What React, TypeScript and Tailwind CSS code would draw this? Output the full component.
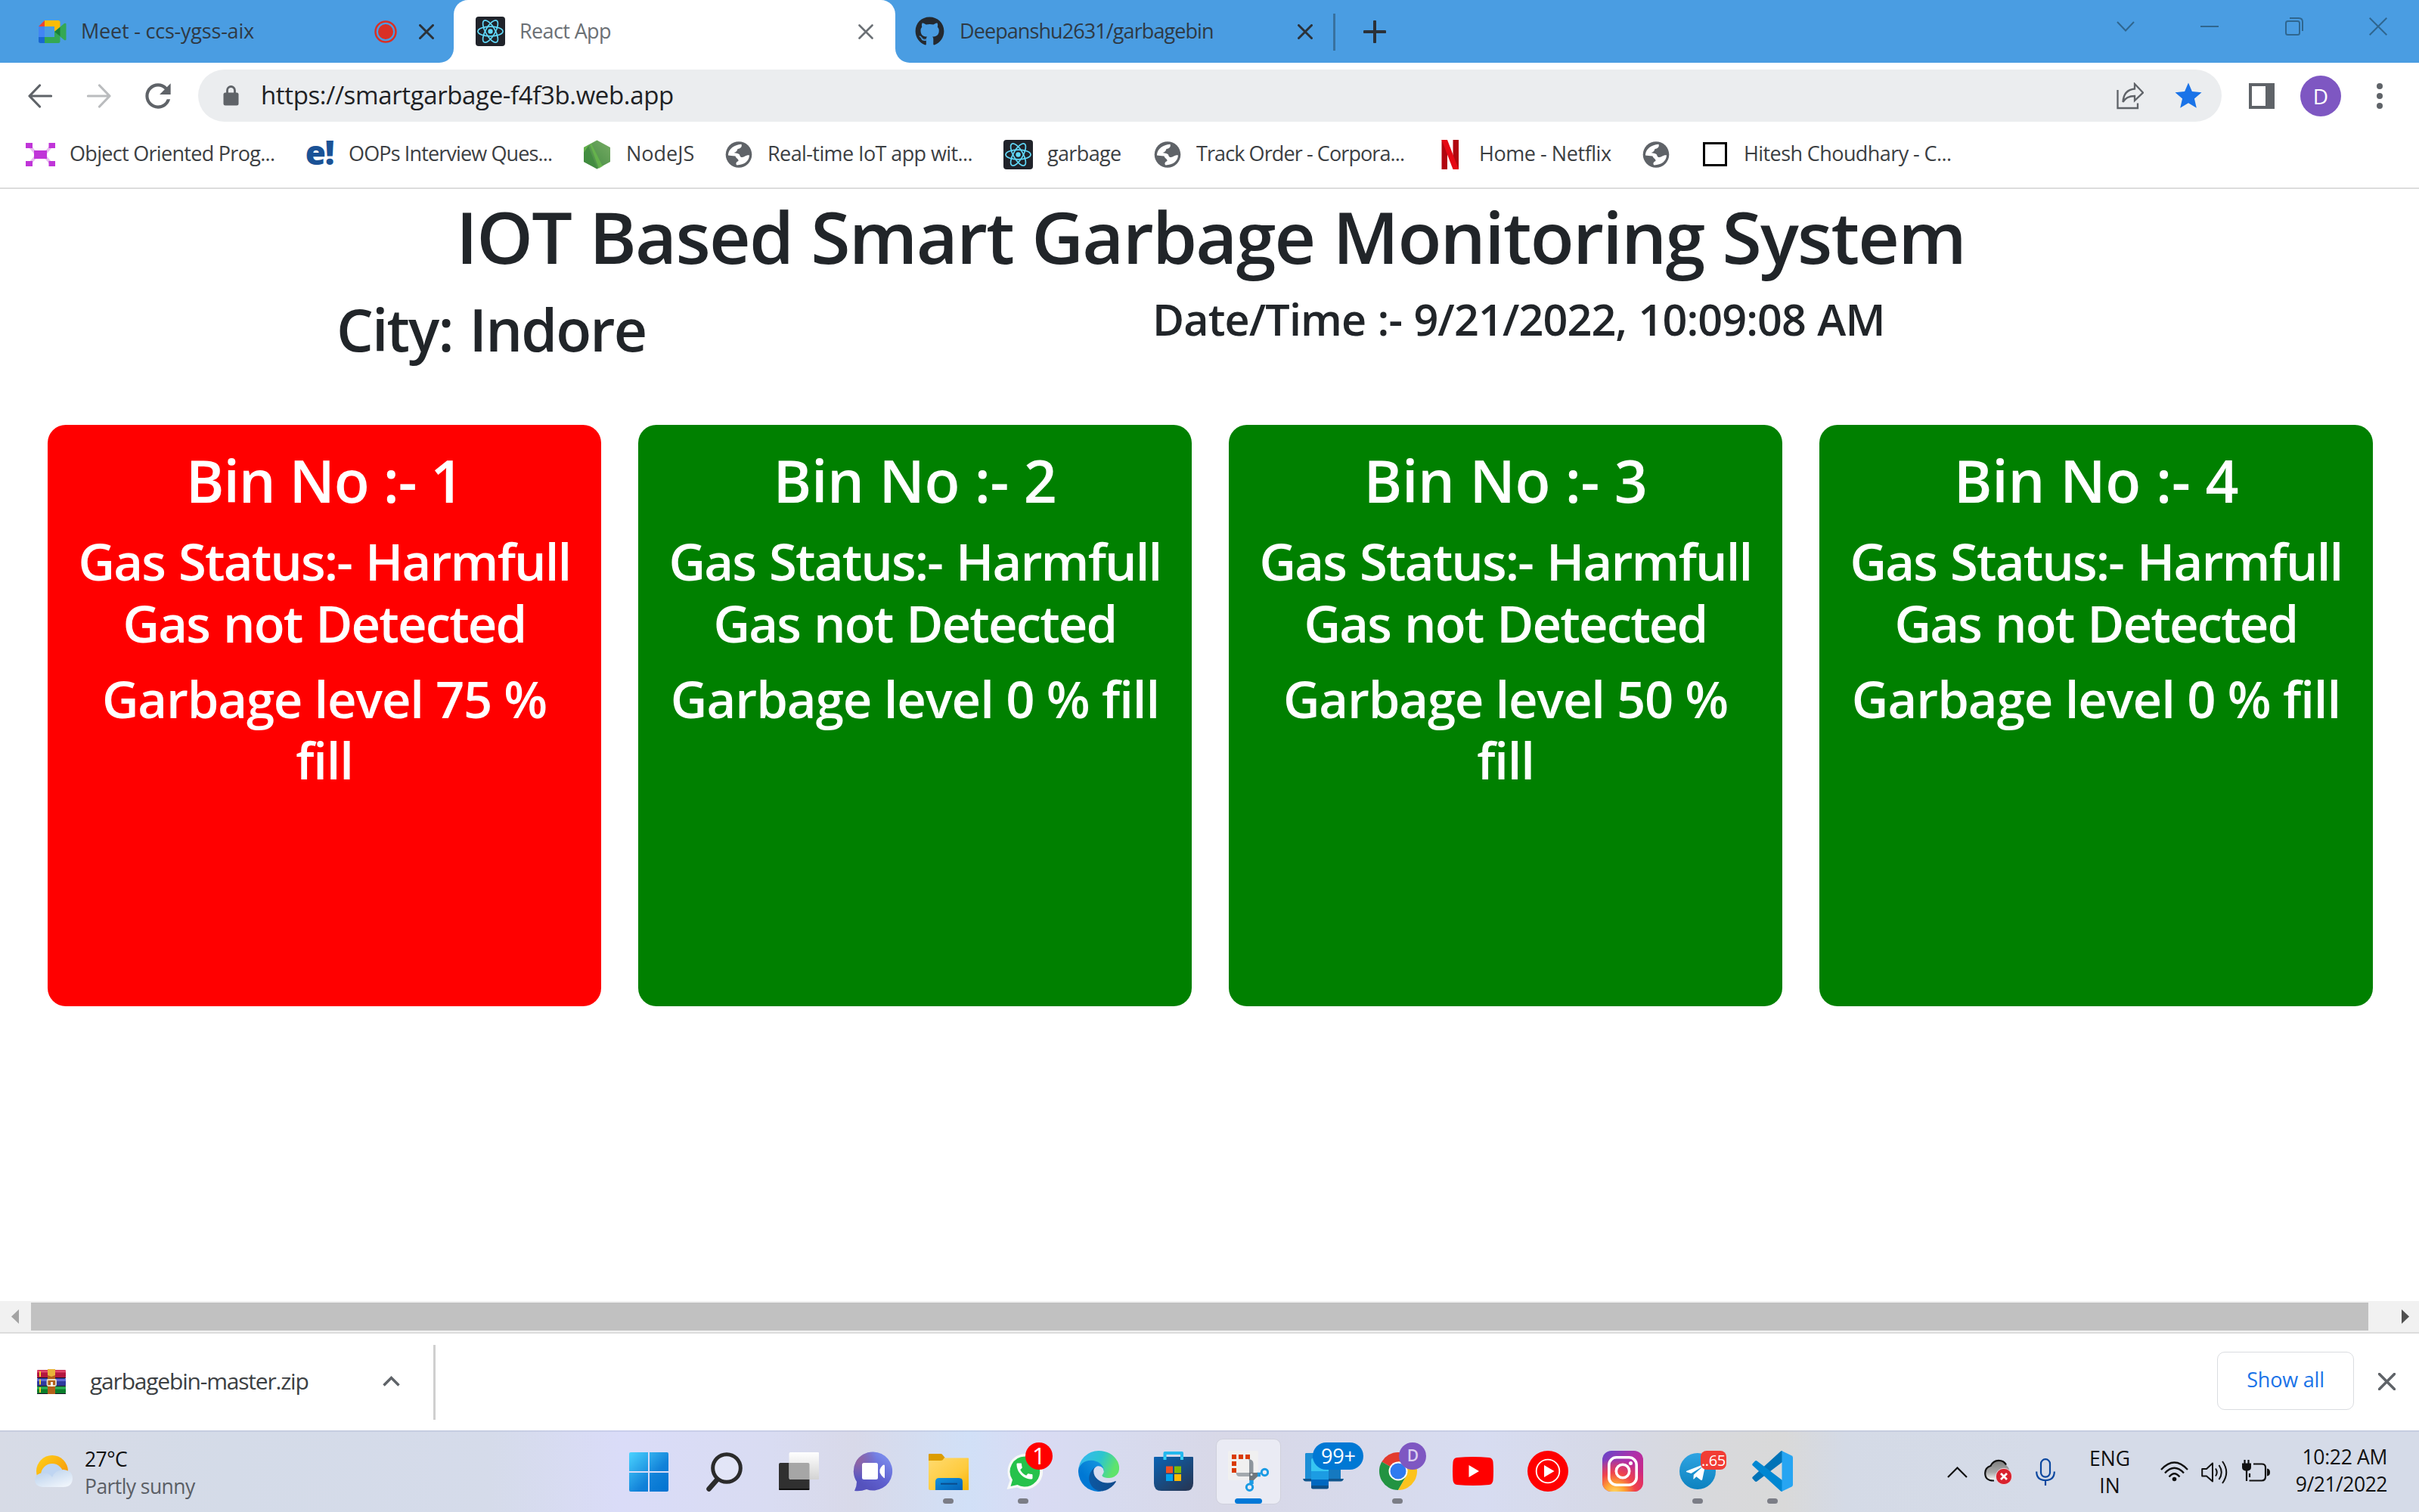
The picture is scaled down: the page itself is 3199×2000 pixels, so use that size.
import type { ReactNode } from "react";
import { MdCall, MdRefresh, MdStar } from "react-icons/md";
import { FaGithub, FaTelegramPlane } from "react-icons/fa";

/* ---------- small shared icons ---------- */

const ReactLogo = () => (
  <svg className="size-[39px]" viewBox="0 0 39 39" fill="none">
    <rect width="39" height="39" rx="4" fill="#20232a" />
    <g stroke="#61dafb" strokeWidth="1.7">
      <ellipse cx="19.5" cy="19.5" rx="16.5" ry="6.3" />
      <ellipse cx="19.5" cy="19.5" rx="16.5" ry="6.3" transform="rotate(60 19.5 19.5)" />
      <ellipse cx="19.5" cy="19.5" rx="16.5" ry="6.3" transform="rotate(120 19.5 19.5)" />
    </g>
    <circle cx="19.5" cy="19.5" r="3.2" fill="#61dafb" />
  </svg>
);

const Globe = () => (
  <svg className="size-[39px]" viewBox="-2.5 -2 39 39">
    <circle cx="17.5" cy="17.5" r="17.3" fill="#5f6368" />
    <path
      fill="#fff"
      d="M3.5 17C4.5 10 11 4.500 21 3.800C22 7 20.500 9.500 16 10C15.500 13 13 14.500 11 15C14 16 18.500 15.500 19 19C20 22 23 21 25 20C27.500 18.500 30 18 31.500 18.500C31 26 25 31 15 31.500C13 30 14 27 17 26C17.500 23 14 23 13 19.500C9 19 6 19 3.500 18.500Z"
    />
  </svg>
);

const Cross = ({ size, color, sw = 3 }: { size: number; color: string; sw?: number }) => (
  <svg width={size} height={size} viewBox={`0 0 ${size} ${size}`} fill="none">
    <path d={`M1.5 1.5L${size - 1.5} ${size - 1.5}M${size - 1.5} 1.5L1.5 ${size - 1.5}`} stroke={color} strokeWidth={sw} strokeLinecap="round" />
  </svg>
);

const MeetLogo = () => (
  <svg className="h-[30px] w-[37px]" viewBox="0 0 37 30">
    <path d="M8 0V8H0Z" fill="#ea4335" />
    <path d="M0 8H8V22H0Z" fill="#4285f4" />
    <path d="M0 22H8V30H2.500Q0 30 0 27.500Z" fill="#1967d2" />
    <path d="M8 0H26Q28.500 0 28.500 2.500V9L21 15V8H8Z" fill="#fbbc04" />
    <path d="M8 22H21V15L28.500 21V27.500Q28.500 30 26 30H8Z" fill="#34a853" />
    <path d="M21 15L34 4Q36.500 3 36.500 5V25Q36.500 27 34 26Z" fill="#34a853" />
    <path d="M21 15L28.500 9V21Z" fill="#188038" />
  </svg>
);

/* ---------- tab strip ---------- */

function TabStrip() {
  return (
    <div className="flex h-[83px] bg-[#4a9de2] text-[27px] text-[#2f3a45]">
      <div className="flex w-[600px] items-center pl-[51px]">
        <MeetLogo />
        <span className="ml-[19px] w-[388px] tracking-[-0.0078em]">Meet - ccs-ygss-aix</span>
        <svg className="size-[30px]" viewBox="0 0 30 30" fill="none">
          <circle cx="15" cy="15" r="13.500" stroke="#d93025" strokeWidth="2.500" />
          <circle cx="15" cy="15" r="10" fill="#d93025" />
        </svg>
        <span className="ml-[29px]">
          <Cross size={20} color="#2b3138" />
        </span>
      </div>

      <div className="relative flex w-[584px] items-center rounded-t-[19px] bg-white pl-[29px] text-[#6b7075]">
        <svg className="absolute bottom-0 -left-[19px] size-[19px]" viewBox="0 0 19 19">
          <path d="M19 0V19H0A19 19 0 0 0 19 0Z" fill="#fff" />
        </svg>
        <svg className="absolute -right-[19px] bottom-0 size-[19px]" viewBox="0 0 19 19">
          <path d="M0 0V19H19A19 19 0 0 1 0 0Z" fill="#fff" />
        </svg>
        <ReactLogo />
        <span className="ml-[19px] w-[448px] tracking-[-0.0231em]">React App</span>
        <Cross size={20} color="#6b7075" sw={2.6} />
      </div>

      <div className="flex w-[579px] items-center pl-[26px]">
        <FaGithub className="size-[39px] text-[#24292f]" />
        <span className="ml-[20px] w-[447px] tracking-[-0.0338em]">Deepanshu2631/garbagebin</span>
        <Cross size={20} color="#2b3138" />
      </div>

      <div className="mt-[18px] h-[49px] w-[3px] bg-[#38719f]" />
      <svg className="mt-[27px] ml-[37px] size-[30px]" viewBox="0 0 30 30">
        <path d="M15 1.500V28.500M1.500 15H28.500" stroke="#2b3138" strokeWidth="4" strokeLinecap="round" />
      </svg>

      <div className="flex h-[70px] flex-1 items-center justify-end gap-[87.500px] pr-[42px]">
        <svg className="h-[14px] w-[24px]" viewBox="0 0 24 14" fill="none">
          <path d="M1 1L12 12.500L23 1" stroke="#2f668f" strokeWidth="2" />
        </svg>
        <div className="h-[2px] w-[24px] bg-[#2f668f]" />
        <svg className="size-[24px]" viewBox="0 0 24 24" fill="none" stroke="#2f668f" strokeWidth="2">
          <rect x="1" y="5" width="18" height="18" rx="2.500" />
          <path d="M6 1H18Q23 1 23 6V18" />
        </svg>
        <svg className="size-[24px]" viewBox="0 0 24 24" fill="none">
          <path d="M0.700 0.700L23.300 23.300M23.300 0.700L0.700 23.300" stroke="#2f668f" strokeWidth="2" />
        </svg>
      </div>
    </div>
  );
}

/* ---------- toolbar ---------- */

const Arrow = ({ color, flip }: { color: string; flip?: boolean }) => (
  <svg className={flip ? "size-[32px] rotate-180" : "size-[32px]"} viewBox="0 0 32 32" fill="none">
    <path d="M30.500 16H2.500M15.500 2L2 16L15.500 30" stroke={color} strokeWidth="3.200" strokeLinecap="round" strokeLinejoin="round" />
  </svg>
);

function Toolbar() {
  return (
    <div className="flex h-[87px] items-center bg-white pl-[37px]">
      <Arrow color="#5f6368" />
      <span className="ml-[46px]">
        <Arrow color="#babcbe" flip />
      </span>
      <MdRefresh className="ml-[37px] size-[50px] text-[#5f6368]" />
      <div className="ml-[28px] flex h-[69px] w-[2676px] items-center rounded-full bg-[#ebedef] pl-[33px]">
        <svg className="h-[27px] w-[21px]" viewBox="0 0 21 27">
          <rect x="0.500" y="9.500" width="20" height="17" rx="2.500" fill="#5f6368" />
          <path d="M5.500 10V6.500A5 5 0 0 1 15.500 6.500V10" fill="none" stroke="#5f6368" strokeWidth="2.800" />
        </svg>
        <span className="mb-px ml-[29px] flex-1 text-[33px] tracking-[-0.0111em] text-[#202124]">
          https://smartgarbage-f4f3b.web.app
        </span>
        <svg className="size-[36px]" viewBox="0 0 36 36" fill="none" stroke="#5f6368" strokeWidth="2.300">
          <path d="M1.500 10V34H28V27.500" />
          <path d="M24 2L35 13.500L24 24V18C16 18 11.500 20.500 8.500 26C9 16 14 9.500 24 8.500Z" strokeLinejoin="miter" />
        </svg>
        <MdStar className="mr-[23px] ml-[38px] size-[42px] text-[#1a73e8]" />
      </div>
      <div className="ml-[36px] h-[34px] w-[34px] border-[4px] border-r-[12px] border-[#5f6368]" />
      <div className="ml-[34px] flex size-[54px] items-center justify-center rounded-full bg-[#7e57c2] text-[28px] text-white">D</div>
      <div className="ml-[47px] flex flex-col gap-[5px]">
        <i className="size-[8px] rounded-full bg-[#5f6368]" />
        <i className="size-[8px] rounded-full bg-[#5f6368]" />
        <i className="size-[8px] rounded-full bg-[#5f6368]" />
      </div>
    </div>
  );
}

/* ---------- bookmarks ---------- */

const PurpleNodes = () => (
  <svg className="size-[39px]" viewBox="0 0 39 39">
    <path d="M5 8L15 20L5 32M34 8L24 20L34 32" fill="none" stroke="#e8bdf0" strokeWidth="4" />
    <g fill="#c035d8">
      <rect x="11" y="14" width="17" height="11" />
      <rect x="0" y="4" width="9" height="7" />
      <rect x="30.500" y="4" width="8.500" height="7" />
      <rect x="0" y="28" width="9" height="7" />
      <rect x="30.500" y="28" width="8.500" height="7" />
    </g>
  </svg>
);

const ELogo = () => (
  <div className="flex size-[39px] items-center justify-center pb-[7px] text-[44px] leading-none font-extrabold tracking-[-0.03em] text-[#1a5296]">e!</div>
);

const NodeLogo = () => (
  <svg className="size-[39px]" viewBox="0 0 39 39">
    <defs>
      <linearGradient id="nodeA" x1="1" y1="0" x2="0" y2="1">
        <stop offset="0" stopColor="#76ac64" />
        <stop offset="1" stopColor="#3f873f" />
      </linearGradient>
    </defs>
    <path d="M19.500 0.500L37 10V29L19.500 38.500L2 29V10Z" fill="url(#nodeA)" />
    <path d="M19.500 0.500L2 10V17L10 5.500L22 38L27 35L12 5Z" fill="#6cc04a" opacity=".65" />
    <path d="M2 17L8 8L20 38.500L2 29Z" fill="#3f8b3d" opacity=".75" />
  </svg>
);

const Netflix = () => (
  <svg className="size-[39px]" viewBox="0 0 39 39">
    <path d="M8.500 0H16V39L8.500 39Z" fill="#b1060f" />
    <path d="M23.500 0H31V39L23.500 38Z" fill="#b1060f" />
    <path d="M8.500 0H16L31 39H23.500Z" fill="#e50914" />
  </svg>
);

const Square = () => (
  <div className="flex size-[39px] items-center justify-center">
    <div className="size-[32px] border-[3.5px] border-black bg-white" />
  </div>
);

const bookmarks: { icon: ReactNode; label: string; width: string; track: string }[] = [
  { icon: <PurpleNodes />, label: "Object Oriented Prog...", width: "w-[369px]", track: "tracking-[-0.0258em]" },
  { icon: <ELogo />, label: "OOPs Interview Ques...", width: "w-[367px]", track: "tracking-[-0.0321em]" },
  { icon: <NodeLogo />, label: "NodeJS", width: "w-[187px]", track: "tracking-[0]" },
  { icon: <Globe />, label: "Real-time IoT app wit...", width: "w-[370px]", track: "tracking-[-0.0221em]" },
  { icon: <ReactLogo />, label: "garbage", width: "w-[197px]", track: "tracking-[-0.0239em]" },
  { icon: <Globe />, label: "Track Order - Corpora...", width: "w-[374px]", track: "tracking-[-0.0335em]" },
  { icon: <Netflix />, label: "Home - Netflix", width: "w-[272px]", track: "tracking-[-0.0167em]" },
  { icon: <Globe />, label: "", width: "w-[78px]", track: "" },
  { icon: <Square />, label: "Hitesh Choudhary - C...", width: "w-[340px]", track: "tracking-[-0.0217em]" },
];

function Bookmarks() {
  return (
    <div className="flex h-[80px] items-center border-b-2 border-[#dcdcdc] bg-white pb-[10px] pl-[34px] text-[27px] text-[#3c4043]">
      {bookmarks.map((b, i) => (
        <div key={i} className={`flex shrink-0 items-center gap-[19px] whitespace-nowrap ${b.width}`}>
          {b.icon}
          {b.label && <span className={`-mt-[2px] ${b.track}`}>{b.label}</span>}
        </div>
      ))}
    </div>
  );
}

/* ---------- page ---------- */

const bins = [
  { no: 1, lines: ["Garbage level 75 %", "fill"], bg: "bg-[#ff0000]", track: "tracking-[-0.0180em]", head: "tracking-[-0.014em]" },
  { no: 2, lines: ["Garbage level 0 % fill"], bg: "bg-[#008000]", track: "tracking-[-0.0155em]", head: "tracking-[-0.004em]" },
  { no: 3, lines: ["Garbage level 50 %", "fill"], bg: "bg-[#008000]", track: "tracking-[-0.0180em]", head: "tracking-[-0.004em]" },
  { no: 4, lines: ["Garbage level 0 % fill"], bg: "bg-[#008000]", track: "tracking-[-0.0155em]", head: "tracking-[-0.002em]" },
];

function Page() {
  return (
    <main className="h-[1471px] bg-white pt-[5px] font-semibold whitespace-nowrap text-[#212529]">
      <h1 className="pl-[603px] text-[95px] leading-[114px] tracking-[-0.0185em] [word-spacing:0.012em]">
        IOT Based Smart Garbage Monitoring System
      </h1>
      <div className="flex h-[193px] items-start pl-[445px]">
        <h2 className="mt-[21px] w-[1079px] text-[77px] leading-[92px] tracking-[-0.0245em] [word-spacing:0.05em]">City: Indore</h2>
        <h3 className="mt-[19px] text-[57.5px] leading-[69px] tracking-[-0.0155em] [word-spacing:0.022em]">Date/Time :- 9/21/2022, 10:09:08 AM</h3>
      </div>
      <div className="flex gap-[49px] pl-[63px]">
        {bins.map((b) => (
          <section key={b.no} className={`h-[769px] w-[732px] rounded-[24px] pt-[28px] text-center text-white ${b.bg}`}>
            <h2 className={`text-[77px] leading-[92px] ${b.head}`}>Bin No :- {b.no}</h2>
            <h3 className="mt-[19px] text-[67px] leading-[82px] tracking-[-0.0275em] [word-spacing:0.035em]">
              <span className="block">Gas Status:- Harmfull</span>
              <span className="block">Gas not Detected</span>
            </h3>
            <h3 className={`mt-[19px] text-[67px] leading-[81px] ${b.track}`}>
              {b.lines.map((l) => (
                <span key={l} className="block">
                  {l}
                </span>
              ))}
            </h3>
          </section>
        ))}
      </div>
    </main>
  );
}

function ScrollBar() {
  return (
    <div className="flex h-[43px] items-center border-b-2 border-[#dcdcdc] bg-[#f1f1f1] pl-[15px]">
      <svg className="h-[19px] w-[10px]" viewBox="0 0 10 19">
        <path d="M10 0V19L0 9.500Z" fill="#a3a3a3" />
      </svg>
      <div className="ml-[16px] h-[37px] w-[3091px] bg-[#c1c1c1]" />
      <svg className="ml-[44px] h-[19px] w-[10px]" viewBox="0 0 10 19">
        <path d="M0 0V19L10 9.500Z" fill="#505050" />
      </svg>
    </div>
  );
}

const RarIcon = () => (
  <svg className="h-[34px] w-[38px]" viewBox="0 0 38 34">
    <rect y="1" width="38" height="10.500" rx="1.500" fill="#b3173f" />
    <rect y="1.500" width="38" height="3" fill="#e0456a" />
    <rect y="12" width="38" height="10.500" rx="1.500" fill="#2f3aa0" />
    <rect y="13" width="38" height="3" fill="#5f6bd6" />
    <rect y="22.500" width="38" height="10" rx="1.500" fill="#0a7d2c" />
    <rect y="23.500" width="38" height="3" fill="#2fb257" />
    <path d="M0 11.500H38M0 22.300H38M0 32.500H38" stroke="#1c1626" strokeWidth="1" />
    <g fill="#f6d02f">
      <rect x="3" y="3" width="2" height="7" />
      <rect x="3" y="13.500" width="2" height="7" />
      <rect x="3" y="24" width="2" height="7" />
    </g>
    <rect x="14" y="0" width="10" height="33" fill="#b4601a" />
    <path d="M14 0H24V8L19 10L14 8Z" fill="#e8b43a" />
    <rect x="13.500" y="14" width="11.500" height="8" rx="1.500" fill="none" stroke="#eadfc0" strokeWidth="1.800" />
    <rect x="18" y="17" width="3" height="6" fill="#f3f3f3" />
  </svg>
);

function DownloadBar() {
  return (
    <div className="flex h-[128px] items-center bg-white pl-[49px]">
      <RarIcon />
      <span className="-mt-[4px] ml-[32px] w-[387px] text-[30px] tracking-[-0.0399em] text-[#3c4043]">garbagebin-master.zip</span>
      <svg className="-mt-[2px] h-[14px] w-[23px]" viewBox="0 0 23 14" fill="none">
        <path d="M1.500 12.500L11.500 2.500L21.500 12.500" stroke="#5f6368" strokeWidth="3.500" />
      </svg>
      <div className="ml-[44px] h-[99px] w-[3px] bg-[#cfcfcf]" />
      <div className="mb-[3px] ml-auto flex h-[77px] w-[181px] items-center justify-center rounded-[10px] border-[1.5px] border-[#dadce0] pb-[3px] text-[27px] font-medium tracking-[-0.0072em] text-[#1a73e8]">
        Show all
      </div>
      <span className="mr-[31px] mb-[2px] ml-[32px]">
        <Cross size={23} color="#5f6368" sw={3.6} />
      </span>
    </div>
  );
}

/* ---------- taskbar ---------- */

const Glyph = ({ children, box = "0 0 54 54" }: { children: ReactNode; box?: string }) => (
  <svg className="size-[54px]" viewBox={box}>
    {children}
  </svg>
);

const StartIcon = () => (
  <Glyph>
    <defs>
      <linearGradient id="win" gradientUnits="userSpaceOnUse" x1="1" y1="2" x2="53" y2="54">
        <stop offset="0" stopColor="#4ad3ff" />
        <stop offset="0.600" stopColor="#1282d9" />
        <stop offset="1" stopColor="#0072d0" />
      </linearGradient>
    </defs>
    <path fill="url(#win)" d="M3 2H26V27H1V4Q1 2 3 2ZM28 2H51Q53 2 53 4V27H28ZM1 29H26V54H3Q1 54 1 52ZM28 29H53V52Q53 54 51 54H28Z" />
  </Glyph>
);

const SearchIcon = () => (
  <Glyph>
    <circle cx="31" cy="23" r="18.300" fill="#ffffff" fillOpacity=".25" stroke="#2b2b2b" strokeWidth="5" />
    <path d="M18.500 38L7.500 50.500" stroke="#2b2b2b" strokeWidth="6.500" strokeLinecap="round" />
  </Glyph>
);

const TaskViewIcon = () => (
  <Glyph>
    <defs>
      <linearGradient id="tvL" x1="0" y1="0" x2="0" y2="1">
        <stop offset="0" stopColor="#fff" />
        <stop offset="1" stopColor="#d3d3d3" />
      </linearGradient>
    </defs>
    <rect x="1" y="16" width="40.500" height="36" rx="2" fill="#303030" />
    <rect x="1" y="50" width="40.500" height="2" rx="1" fill="#0e0e0e" />
    <rect x="14.500" y="2" width="40" height="36" rx="2" fill="url(#tvL)" />
    <path d="M14.500 16H39.500Q41.500 16 41.500 18V38H16.500Q14.500 38 14.500 36Z" fill="#a6a6a6" />
  </Glyph>
);

const ChatIcon = () => (
  <Glyph>
    <defs>
      <linearGradient id="chat" x1="0.900" y1="0.100" x2="0.300" y2="0.900">
        <stop offset="0" stopColor="#7d8fee" />
        <stop offset="0.600" stopColor="#5f60cf" />
        <stop offset="1" stopColor="#5552bd" />
      </linearGradient>
      <radialGradient id="chatP" cx="0.100" cy="0.200" r="0.500">
        <stop offset="0" stopColor="#95659f" />
        <stop offset="1" stopColor="#95659f" stopOpacity="0" />
      </radialGradient>
    </defs>
    <path d="M27 1.500A25.500 25.500 0 1 1 18 51Q10 54 2 53Q5 47 5 41A25.500 25.500 0 0 1 27 1.500Z" fill="url(#chat)" />
    <path d="M27 1.500A25.500 25.500 0 1 1 18 51Q10 54 2 53Q5 47 5 41A25.500 25.500 0 0 1 27 1.500Z" fill="url(#chatP)" />
    <rect x="12" y="16" width="21" height="22" rx="2.500" fill="#fff" />
    <path d="M35.500 25Q38 19 41 18.500Q42 18.500 42 20V35Q42 36.500 41 36Q38 34 35.500 29Z" fill="#fff" />
  </Glyph>
);

const FolderIcon = () => (
  <Glyph>
    <defs>
      <linearGradient id="fold" x1="0" y1="0" x2="1" y2="1">
        <stop offset="0.100" stopColor="#ffd867" />
        <stop offset="0.600" stopColor="#fecb3e" />
        <stop offset="1" stopColor="#f8b100" />
      </linearGradient>
      <linearGradient id="foldB" x1="0" y1="0" x2="1" y2="1">
        <stop offset="0" stopColor="#1193e0" />
        <stop offset="1" stopColor="#0560b4" />
      </linearGradient>
    </defs>
    <path d="M2 4H17Q19 4 20 6L22.500 9V14H1V5Q1 4 2 4Z" fill="#dc9c00" />
    <path d="M1 13H17Q20 13 21.500 9.500H53Q55 9.500 55 11.500V50Q55 52 53 52H3Q1 52 1 50Z" fill="url(#fold)" />
    <path d="M10 52V41Q10 36 15 36H41Q46 36 46 41V52Z" fill="url(#foldB)" />
    <path d="M17 43.700H39" stroke="#0a4c8c" strokeWidth="2" />
  </Glyph>
);

const WhatsAppIcon = () => (
  <div className="relative size-[54px]">
    <Glyph>
      <path d="M28.500 4A23.500 23.500 0 1 1 18 48.500L4.500 51L8.500 39A23.500 23.500 0 0 1 28.500 4Z" fill="#f7f9f7" />
      <path d="M28.500 7.500A20 20 0 1 1 18.500 45L9.500 47L12 38.500A20 20 0 0 1 28.500 7.500Z" fill="#25c24b" />
    </Glyph>
    <MdCall className="absolute top-[13px] left-[14px] size-[28px] text-white" />
  </div>
);

const EdgeIcon = () => (
  <Glyph box="0 0 256 256">
    <defs>
      <linearGradient id="e1" x1="0" y1="0.500" x2="1" y2="0.500">
        <stop offset="0" stopColor="#0c59a4" />
        <stop offset="1" stopColor="#114a8b" />
      </linearGradient>
      <linearGradient id="e2" x1="1" y1="0" x2="0.200" y2="1">
        <stop offset="0" stopColor="#1b9de2" />
        <stop offset="0.700" stopColor="#0078d4" />
      </linearGradient>
      <linearGradient id="e3" x1="0" y1="0.300" x2="1" y2="0.600">
        <stop offset="0" stopColor="#35b8f1" />
        <stop offset="0.500" stopColor="#2cc5cf" />
        <stop offset="0.900" stopColor="#5fe36c" />
      </linearGradient>
    </defs>
    <path fill="url(#e1)" d="M230.500 190.500c-3.400 1.800-6.900 3.400-10.500 4.700a101.700 101.700 0 0 1-35.800 6.500c-47.200 0-88.300-32.500-88.300-74.100a31.500 31.500 0 0 1 16.400-27.300c-42.700 1.800-53.600 46.300-53.600 72.300 0 73.700 67.900 81.200 82.500 81.200 7.900 0 19.700-2.300 26.800-4.500l1.300-.5a128 128 0 0 0 66.400-52.700 4 4 0 0 0-5.200-5.600z" />
    <path fill="url(#e2)" d="M105.700 241.400a79.200 79.200 0 0 1-22.700-21.300 80.700 80.700 0 0 1 29.400-120c3.100-1.500 8.400-4.100 15.500-4a32.300 32.300 0 0 1 25.700 13 31.900 31.900 0 0 1 6.300 18.700c0-.2 24.500-79.600-80-79.600-43.900 0-80 41.600-80 78.200a130.200 130.200 0 0 0 12.100 56 128 128 0 0 0 156.400 67 75.600 75.600 0 0 1-62.800-8z" />
    <path fill="url(#e3)" d="M152.300 148.900c-.9 1-3.400 2.500-3.400 5.600 0 2.600 1.700 5.200 4.800 7.300 14.400 10.100 41.700 8.700 41.800 8.700a59.900 59.900 0 0 0 30.400-8.300 61.800 61.800 0 0 0 30.500-53.200c.3-22.400-8-37.300-11.300-43.900C223.800 23.900 177.700 0 127.600 0A128 128 0 0 0 0 126.200c.5-36.500 36.800-66 80-66 3.500 0 23.500.3 42 10.100 16.300 8.600 24.900 18.900 30.800 29.200 6.200 10.700 7.300 24.100 7.300 29.500 0 5.300-2.700 13.300-7.800 19.900z" />
  </Glyph>
);

const StoreIcon = () => (
  <Glyph>
    <defs>
      <linearGradient id="store" x1="0" y1="0" x2="0.800" y2="1">
        <stop offset="0" stopColor="#0a63b4" />
        <stop offset="1" stopColor="#253858" />
      </linearGradient>
    </defs>
    <path d="M15.500 12V3H38V12" fill="none" stroke="#25b8ee" strokeWidth="4" strokeLinejoin="round" />
    <path d="M1 9Q1 8 2 8H52Q53 8 53 9V43Q53 53 43 53H11Q1 53 1 43Z" fill="url(#store)" />
    <path d="M15.500 8V12M38 8V12" stroke="#35d0f6" strokeWidth="4" />
    <path d="M17 20.500H26V29.500H17Z" fill="#f25022" />
    <path d="M28 20.500H37V29.500H28Z" fill="#7fba00" />
    <path d="M17 31H26V40H17Z" fill="#00a4ef" />
    <path d="M28 31H37V40H28Z" fill="#ffb900" />
  </Glyph>
);

const SnipIcon = () => (
  <div className="relative flex h-[87px] w-[86px] items-center justify-center rounded-[9px] border border-[#cfd0dc] bg-[#eaebf4]">
    <Glyph>
      <rect x="0" y="0" width="40" height="39" rx="2" fill="#f0f0f0" />
      <path d="M5 5h6v6h-6zM14 5h6v6h-6zM23 5h6v6h-6zM5 14h6v6h-6zM5 23h6v6h-6z" fill="#da3b01" />
      <path d="M27 11Q33.500 11.500 33.500 17V34H28V13Z" fill="#8d959c" />
      <path d="M10.500 29H34V34H15Q11 34 10.500 29Z" fill="#a3a9ae" />
      <path d="M38 31.500H43M31 39V44" stroke="#1b9be4" strokeWidth="5.400" />
      <circle cx="48.500" cy="28.500" r="4.200" fill="none" stroke="#1b9be4" strokeWidth="3" />
      <circle cx="28.500" cy="48.300" r="4.200" fill="none" stroke="#1b9be4" strokeWidth="3" />
      <path d="M28 29H39V34L34 39H28Z" fill="#6f777d" />
      <circle cx="31" cy="31.500" r="1.500" fill="#dfe3e6" />
    </Glyph>
  </div>
);

const PhoneIcon = () => (
  <Glyph>
    <rect x="3" y="3" width="47" height="36" rx="2" fill="#1579c0" />
    <rect x="3" y="3" width="12" height="36" rx="2" fill="#1b8ed6" />
    <path d="M0 37H54Q53 40.500 50 40.500H4Q1 40.500 0 37Z" fill="#10558c" />
    <path d="M11 12Q11 10 13 10H32Q34 10 34 12V27H11Z" fill="#37c6f2" />
    <path d="M11 27H34V38H11Z" fill="#1c9ce3" />
    <path d="M11 38H34V46H11Z" fill="#0068c0" />
    <path d="M11 46H34V48.500Q34 50.500 32 50.500H13Q11 50.500 11 48.500Z" fill="#0c4f88" />
  </Glyph>
);

const ChromeIcon = () => (
  <Glyph>
    <path d="M27 27L5.300 14.500A25 25 0 0 1 48.700 14.500H27Z" fill="#e33b2e" />
    <path d="M27 27L5.300 14.500A25 25 0 0 0 27 52L37.800 33.200Z" fill="#229342" />
    <path d="M27 14.500H48.700A25 25 0 0 1 27 52L37.800 33.200L27 27Z" fill="#fcc31e" />
    <circle cx="27" cy="27" r="12.500" fill="#fff" />
    <circle cx="27" cy="27" r="10.500" fill="#2f7af0" />
  </Glyph>
);

const YouTubeIcon = () => (
  <Glyph>
    <path d="M6 9Q27 7 48 9Q53 9.500 53.500 15Q54.500 27 53.500 39Q53 44.500 48 45Q27 47 6 45Q1 44.500 0.500 39Q-0.500 27 0.500 15Q1 9.500 6 9Z" fill="#f00" />
    <path d="M21.500 19L35 27L21.500 35Z" fill="#fff" />
  </Glyph>
);

const YtMusicIcon = () => (
  <Glyph>
    <circle cx="27" cy="27" r="27" fill="#f00" />
    <circle cx="27" cy="27" r="15.300" fill="none" stroke="#fff" strokeWidth="1.800" />
    <path d="M22 19L35.500 27L22 35Z" fill="#fff" />
  </Glyph>
);

const InstagramIcon = () => (
  <Glyph>
    <defs>
      <linearGradient id="igB" x1="0.100" y1="0" x2="0.900" y2="1">
        <stop offset="0" stopColor="#6a45c8" />
        <stop offset="0.400" stopColor="#b02fa8" />
        <stop offset="1" stopColor="#e0246a" />
      </linearGradient>
      <radialGradient id="igR" cx="0.300" cy="1.050" r="0.850">
        <stop offset="0" stopColor="#ffdd6b" />
        <stop offset="0.300" stopColor="#ffa334" />
        <stop offset="0.600" stopColor="#f0434b" />
        <stop offset="1" stopColor="#f0434b" stopOpacity="0" />
      </radialGradient>
    </defs>
    <rect width="54" height="54" rx="12" fill="url(#igB)" />
    <rect width="54" height="54" rx="12" fill="url(#igR)" />
    <g fill="none" stroke="#fff" strokeWidth="3.600">
      <rect x="8.800" y="8.800" width="36.400" height="36.400" rx="10" />
      <circle cx="27" cy="27" r="8.700" />
    </g>
    <circle cx="37.500" cy="16.500" r="2.500" fill="#fff" />
  </Glyph>
);

const TelegramIcon = () => (
  <div className="relative size-[54px]">
    <Glyph>
      <defs>
        <linearGradient id="tg" x1="0" y1="0" x2="0" y2="1">
          <stop offset="0" stopColor="#2fa4e2" />
          <stop offset="1" stopColor="#0d82bf" />
        </linearGradient>
      </defs>
      <circle cx="27" cy="27" r="24" fill="url(#tg)" />
    </Glyph>
    <FaTelegramPlane className="absolute top-[14px] left-[10px] size-[29px] text-white" />
  </div>
);

const VsCodeIcon = () => (
  <Glyph>
    <path d="M0.800 37Q-0.300 36 0.800 34.500L38 0.500L40 0V15L6.500 40.500Q5 41.500 3.500 40Z" fill="#0073b7" />
    <path d="M0.800 17Q-0.300 18 0.800 19.500L38 53.500L40 54V39L6.500 13.500Q5 12.500 3.500 14Z" fill="#0087d2" />
    <path d="M39.500 0.300L52.500 6.500Q54 7.300 54 9V45Q54 46.700 52.500 47.500L39.500 53.700Z" fill="#27a5f2" />
  </Glyph>
);

const Badge = ({ className, children }: { className: string; children: ReactNode }) => (
  <div className={`absolute flex items-center justify-center leading-none ${className}`}>{children}</div>
);

const apps: { icon: ReactNode; badge?: ReactNode; running?: boolean; active?: boolean }[] = [
  { icon: <StartIcon /> },
  { icon: <SearchIcon /> },
  { icon: <TaskViewIcon /> },
  { icon: <ChatIcon /> },
  { icon: <FolderIcon />, running: true },
  {
    icon: <WhatsAppIcon />,
    running: true,
    badge: <Badge className="top-[16px] left-[52px] size-[36px] rounded-full bg-[#ff0000] pb-[2px] text-[31px] text-white">1</Badge>,
  },
  { icon: <EdgeIcon /> },
  { icon: <StoreIcon /> },
  { icon: <SnipIcon />, active: true },
  {
    icon: <PhoneIcon />,
    badge: (
      <Badge className="top-[16px] left-[36px] h-[36px] w-[67px] rounded-full bg-[#0078d4] pb-[2px] text-[27px] tracking-[-0.01em] text-white">99+</Badge>
    ),
  },
  {
    icon: <ChromeIcon />,
    running: true,
    badge: <Badge className="top-[16px] left-[51px] size-[36px] rounded-full bg-[#7e57c2] pb-px text-[21px] font-semibold text-[#dccff0]">D</Badge>,
  },
  { icon: <YouTubeIcon /> },
  { icon: <YtMusicIcon /> },
  { icon: <InstagramIcon /> },
  {
    icon: <TelegramIcon />,
    running: true,
    badge: <Badge className="top-[27px] left-[53px] h-[25px] w-[34px] rounded-[8px] bg-[#f23c34] text-[20px] tracking-[-0.02em] text-white">..65</Badge>,
  },
  { icon: <VsCodeIcon />, running: true },
];

function Tray() {
  return (
    <div className="flex flex-1 items-center pt-[2px] text-[26.5px] leading-[36px] text-[#111]">
      <svg className="ml-[181px] h-[15px] w-[27px]" viewBox="0 0 27 15" fill="none">
        <path d="M1 14L13.500 1.500L26 14" stroke="#111" strokeWidth="2.200" />
      </svg>
      <svg className="ml-[22px] h-[34px] w-[37px]" viewBox="0 0 37 34">
        <defs>
          <linearGradient id="cloud" x1="0" y1="0" x2="0" y2="1">
            <stop offset="0" stopColor="#7d7d7d" />
            <stop offset="0.600" stopColor="#a8a8a8" />
            <stop offset="1" stopColor="#f5f5f5" />
          </linearGradient>
        </defs>
        <path d="M9 27.500Q1.500 26.500 1.500 19Q1.500 11 9 9.500Q12 2 19 2Q27 2 30 9Q34 12 33 18L28 27Z" fill="url(#cloud)" />
        <path d="M13 28.500Q1.200 29 1.200 18.500Q1.500 11 8.500 9Q12 1.800 19 1.800Q26 1.800 29 7.500" fill="none" stroke="#111" strokeWidth="2.200" />
        <circle cx="26" cy="23" r="10.700" fill="#d9222e" stroke="#e9dfe6" strokeWidth="1" />
        <path d="M22 19L30 27M30 19L22 27" stroke="#fff" strokeWidth="2.800" />
      </svg>
      <svg className="-mt-px ml-[31px] h-[36px] w-[26px]" viewBox="0 0 26 36" fill="none" stroke="#0a479f" strokeWidth="2.200">
        <rect x="7" y="1.200" width="12" height="23.500" rx="6" />
        <path d="M1.200 17.500Q1.200 29 13 29Q24.800 29 24.800 17.500M13 29V36" />
      </svg>
      <div className="ml-[40px] flex w-[64px] flex-col items-center">
        <span>ENG</span>
        <span>IN</span>
      </div>
      <svg className="-mt-[2px] ml-[35px] h-[27px] w-[37px]" viewBox="0 0 37 27" fill="none" stroke="#111" strokeWidth="2.300">
        <path d="M1 11Q18.500 -8 36 11M6 15.500Q18.500 2 31 15.500M11.500 20.500Q18.500 12 25.500 20.500" />
        <circle cx="18.500" cy="23.500" r="2.800" fill="#111" stroke="none" />
      </svg>
      <svg className="ml-[17px] h-[31px] w-[37px]" viewBox="0 0 37 31" fill="none" stroke="#111" strokeWidth="2">
        <path d="M1.200 11H7L15 3.500V27.500L7 20.500H1.200Z" strokeLinejoin="round" />
        <path d="M19 10.500Q22.500 15.500 19 20.500M23.500 6Q30 15.500 23.500 25M28 1Q38.500 15.500 28 30" />
      </svg>
      <svg className="-mt-[3px] ml-[17px] h-[29px] w-[37px]" viewBox="0 0 37 29" fill="none" stroke="#111" strokeWidth="2.200">
        <path d="M15 5.500H26Q31 5.500 31 10V22Q31 27.500 26 27.500H9.500" />
        <path d="M0 4.500H12V10Q12 13.500 8 14.500H4Q0 13.500 0 10Z" fill="#111" stroke="none" />
        <path d="M3.500 0V5M8.500 0V5M6 14V28M10 18V23" />
        <path d="M33 11.500Q37 12 37 16.500Q37 21 33 21.500Z" fill="#111" stroke="none" />
      </svg>
      <div className="-mt-[4px] ml-auto flex flex-col items-end pr-[42px]">
        <span className="tracking-[-0.0119em]">10:22 AM</span>
        <span className="tracking-[-0.0181em]">9/21/2022</span>
      </div>
    </div>
  );
}

function Taskbar() {
  return (
    <div className="flex h-[108px] bg-[linear-gradient(90deg,#d7dbe6_0px,#d4dbe8_300px,#d5dbea_650px,#dadcf8_820px,#d9dcf2_1020px,#d8d9e9_1130px,#d1e0f7_1280px,#d9dbf3_1370px,#d7dbf0_1450px,#d8d8e7_1620px,#d7daec_1820px,#d7dcf1_1960px,#d6d9e7_2120px,#d8d9dc_2260px,#d9d9d9_2360px,#d4dae6_2440px,#d5dbe8_2700px,#d5dbe8_3199px)] shadow-[inset_0_2px_0_rgba(150,165,200,0.25)]">
      <div className="flex w-[808.5px] items-center pl-[46px]">
        <svg className="h-[42px] w-[50px]" viewBox="0 0 50 42">
          <defs>
            <linearGradient id="sun" x1="0" y1="0" x2="1" y2="1">
              <stop offset="0" stopColor="#ffd21a" />
              <stop offset="1" stopColor="#f58a07" />
            </linearGradient>
            <linearGradient id="cl" x1="0" y1="0" x2="0.700" y2="1">
              <stop offset="0" stopColor="#b4cdeb" />
              <stop offset="1" stopColor="#eef4fb" />
            </linearGradient>
          </defs>
          <circle cx="23" cy="21" r="21" fill="url(#sun)" />
          <circle cx="23" cy="26" r="15" fill="#bfd5f2" />
          <path d="M10 42Q0 41 0 32Q1 24 11 23Q19 23 23 29Q27 19 38 19Q50 20 50 31Q49 42 38 42Z" fill="url(#cl)" />
        </svg>
        <div className="ml-[16px] flex flex-col pt-[3px] text-[26.5px] leading-[36px] tracking-[-0.0212em]">
          <span className="text-[#111]">27°C</span>
          <span className="text-[#5a5e65]">Partly sunny</span>
        </div>
      </div>
      {apps.map((a, i) => (
        <div key={i} className="relative flex w-[99.1px] shrink-0 items-center justify-center">
          {a.icon}
          {a.badge}
          {a.running && <i className="absolute bottom-[11px] left-[42px] h-[7px] w-[14px] rounded-full bg-[#7b7d86]" />}
          {a.active && <i className="absolute bottom-[11px] left-[32px] h-[7px] w-[36px] rounded-full bg-[#0078d7]" />}
        </div>
      ))}
      <Tray />
    </div>
  );
}

export default function App() {
  return (
    <div className="flex h-[2000px] w-[3199px] flex-col overflow-hidden bg-white font-['Open_Sans',sans-serif] whitespace-nowrap">
      <TabStrip />
      <Toolbar />
      <Bookmarks />
      <Page />
      <ScrollBar />
      <DownloadBar />
      <Taskbar />
    </div>
  );
}
